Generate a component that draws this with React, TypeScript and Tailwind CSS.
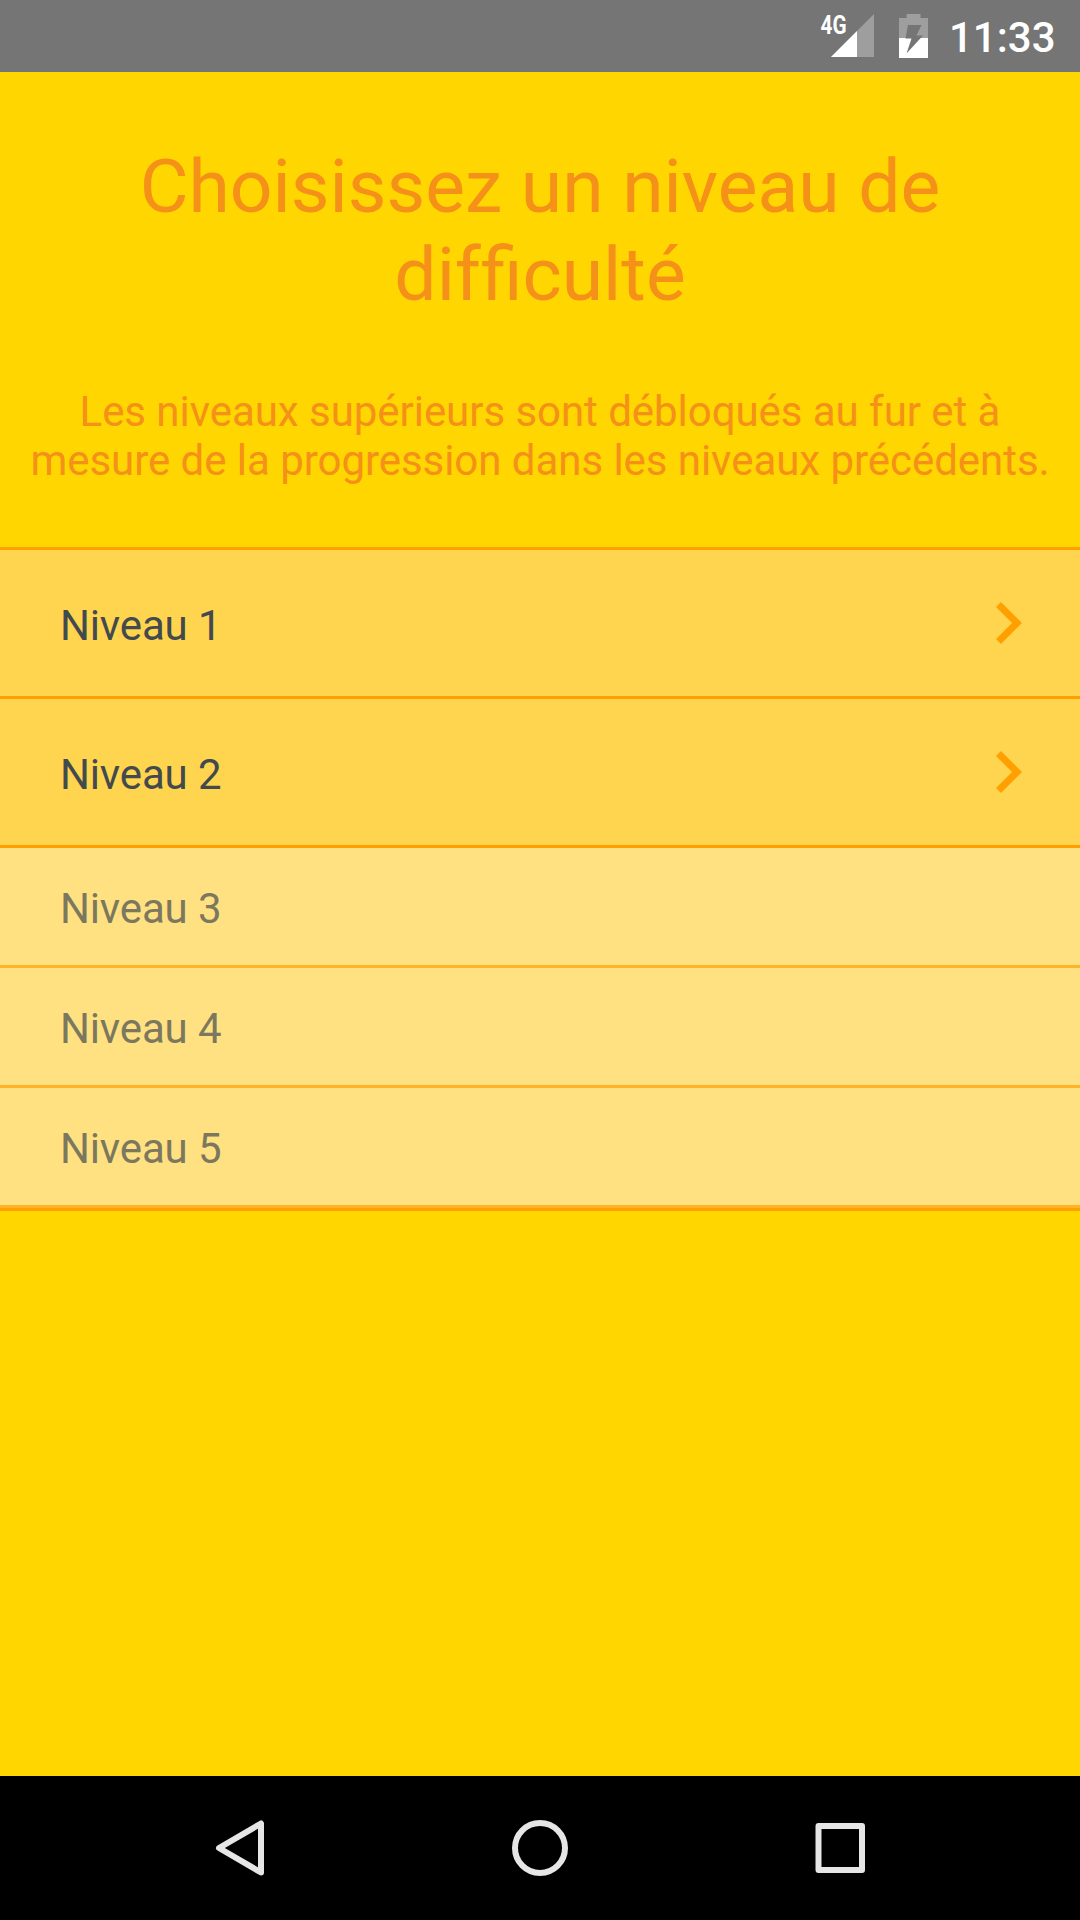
const rows = [
  { label: 'Niveau 1', open: true },
  { label: 'Niveau 2', open: true },
  { label: 'Niveau 3', open: false },
  { label: 'Niveau 4', open: false },
  { label: 'Niveau 5', open: false },
];

function StatusBar() {
  return (
    <header className="flex h-[72px] shrink-0 items-center bg-[#757575] text-white">
      <svg className="ml-[820px] h-[72px] w-[60px]" viewBox="820 0 60 72">
        <path d="M874 14V57H831Z" fill="#9e9e9e" />
        <path d="M857 31V57H831Z" fill="#fff" />
        <text x="820.5" y="33.5" fontSize="26" fontWeight="700" fill="#fff" textLength="26" lengthAdjust="spacingAndGlyphs" fontFamily="Roboto">4G</text>
      </svg>
      <svg className="ml-[16px] h-[72px] w-[36px]" viewBox="896 0 36 72">
        <path d="M899 18H906.5V14H920.5V18H928V38H899Z" fill="#9e9e9e" />
        <path d="M899 38H928V58H899Z" fill="#fff" />
        <path d="M908 25H921.5L916.5 35.5H923L906.5 53.5L911.5 38.5H905.5Z" fill="#757575" />
      </svg>
      <span className="ml-[17px] mt-[4px] text-[42px] font-medium leading-none">11:33</span>
    </header>
  );
}

export default function App() {
  return (
    <div className="flex h-[1920px] w-[1080px] flex-col overflow-hidden bg-[#ffd600] font-[Roboto,sans-serif]">
      <StatusBar />
      <h1 className="mt-[70px] text-center text-[75px] leading-[88px] text-[#f59019]">
        Choisissez un niveau de<br />
        {'dif\u200cficulté'}
      </h1>
      <p className="mt-[69px] text-center text-[42px] leading-[49px] tracking-[-0.045px] whitespace-nowrap text-[#f59019]">
        Les niveaux supérieurs sont débloqués au fur et à<br />mesure de la progression dans les niveaux précédents.
      </p>
      <ul className="mt-[62px] border-y-[3px] border-[#ffa000]">
        {rows.map((r) => (
          <li key={r.label} className={r.open ? 'flex h-[149px] items-center justify-between border-b-[3px] border-[#ffa000] bg-[#ffd54f] pl-[60px] pr-[55px] text-[42px] tracking-[-0.15px] text-[#424a4e]' : 'flex h-[120px] items-center border-b-[3px] border-[#ffb327] bg-[#ffe182] pl-[60px] text-[42px] tracking-[-0.15px] text-[#7b785e]'}>
            <span className={r.open ? 'mt-[5px]' : 'mt-[3px]'}>{r.label}</span>
            {r.open && <svg className="h-[44px] w-[32px]" viewBox="0 0 32 44"><path d="M5.5 3.5L24 22L5.5 40.5" fill="none" stroke="#ffa000" strokeWidth="7" /></svg>}
          </li>
        ))}
      </ul>
      <nav className="mt-auto h-[144px] bg-black">
        <svg className="h-[144px] w-[1080px]" viewBox="0 0 1080 144" fill="none" stroke="#e6e6e6" strokeWidth="6" strokeLinejoin="round">
          <path d="M261 47.5V96.5L219 72Z" />
          <circle cx="540" cy="72" r="25" />
          <rect x="818.5" y="50" width="43.5" height="44" />
        </svg>
      </nav>
    </div>
  );
}
